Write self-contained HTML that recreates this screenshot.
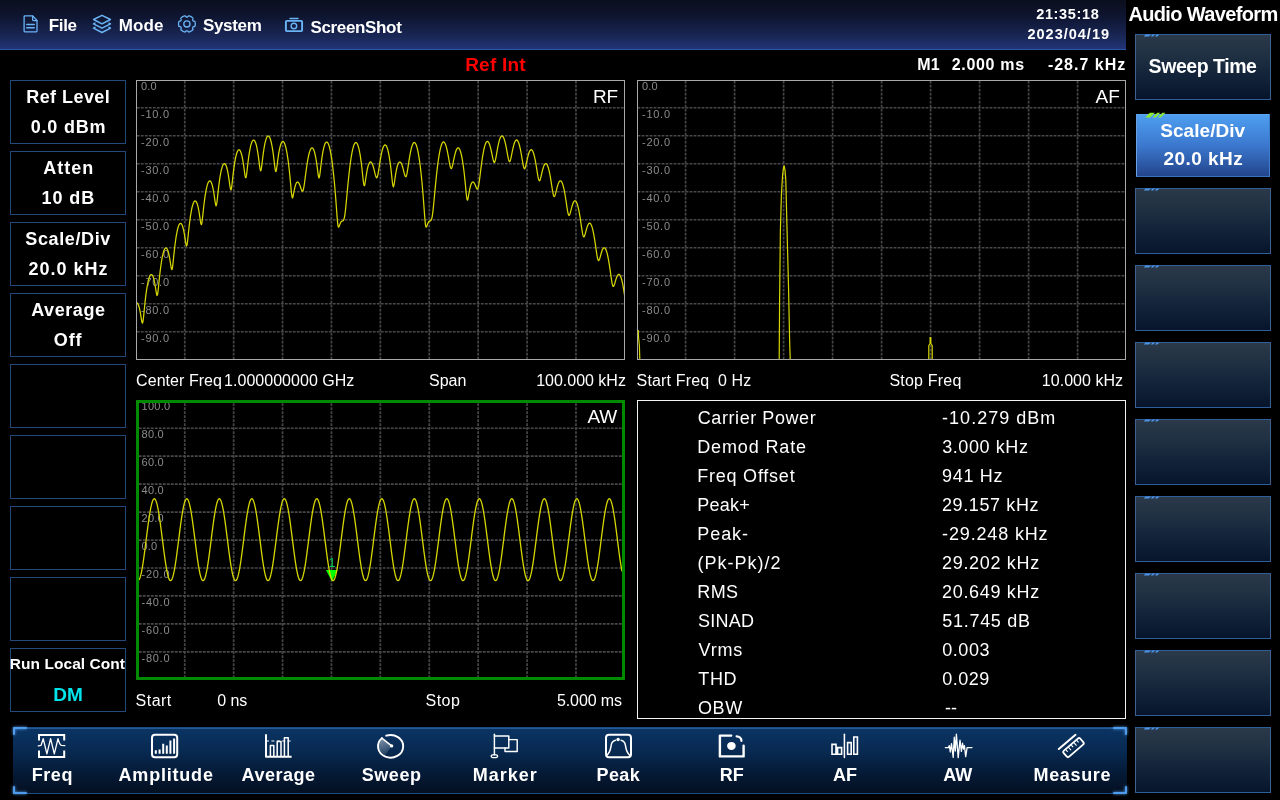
<!DOCTYPE html>
<html lang="en"><head><meta charset="utf-8"><title>Audio Waveform</title>
<style>
html,body{margin:0;padding:0;background:#000;}
body{width:1280px;height:800px;position:relative;overflow:hidden;font-family:"Liberation Sans",sans-serif;color:#fff;}
.t{position:absolute;line-height:1;white-space:pre;}
.abs{position:absolute;}
#topbar{left:0;top:0;width:1126px;height:50px;background:linear-gradient(180deg,#0b0e1c 0%,#0f1632 35%,#1a2858 75%,#24357a 100%);box-shadow:inset 0 -1px 0 #2b58a8;}
.sk{position:absolute;left:1135px;width:134px;height:64px;border:1px solid #2f5e9a;border-left-color:#3f618e;border-right-color:#3f618e;background:linear-gradient(180deg,#2b3949 0%,#203143 30%,#13243a 62%,#07152c 100%);}
.sk.on{left:1136px;width:132px;background:linear-gradient(180deg,#4e9ef0 0%,#3b78ce 50%,#23458c 100%);border-color:#5aa4f0 #3f7ccc #3a72c0 #6aa0e4;}
.lb{position:absolute;left:10px;width:114px;height:62px;border:1px solid #23487a;}
#bbar{left:13px;top:727px;width:1114px;height:67px;background:linear-gradient(180deg,#0b3565 0%,#082a52 35%,#051a36 70%,#040f20 100%);box-shadow:inset 0 1px 0 #1c4e88, inset 0 2px 0 #245a98, inset 0 -1px 0 #1c4c86;}
</style></head>
<body>
<div id="topbar" class="abs"></div>
<svg class="abs" style="left:0;top:0" width="420" height="50" viewBox="0 0 420 50" fill="none" stroke="#6ab4f5" stroke-width="1.5" stroke-linejoin="round" stroke-linecap="round">
<path d="M24.9 15.9h7.8l4.3 4.6v10.6a0.8 0.8 0 0 1-0.8 0.8h-11.3a0.8 0.8 0 0 1-0.8-0.8v-14.4a0.8 0.8 0 0 1 0.8-0.8z" stroke-width="1.3"/>
<path d="M32.6 16.2v3.2a1.3 1.3 0 0 0 1.3 1.3h3.0" stroke-width="1.3"/>
<path d="M26.8 24.5h7.4M26.8 27.8h7.4" stroke-width="1.5"/>
<path d="M102 15.3l8.4 4.2-8.4 4.3-8.4-4.3z"/>
<path d="M95 23.1L93.5 23.9L102 28.2L110.5 23.9L109 23.1"/>
<path d="M95 27.4L93.5 28.2L102 32.5L110.5 28.2L109 27.4"/>
<circle cx="186.9" cy="23.9" r="3.1" stroke-width="1.3"/>
<path d="M195.25 23.90 L195.25 24.05 L195.24 24.19 L195.24 24.34 L195.23 24.48 L195.22 24.63 L195.20 24.77 L195.19 24.92 L195.17 25.06 L195.15 25.21 L195.12 25.35 L195.10 25.49 L195.07 25.64 L195.04 25.78 L195.00 25.92 L194.97 26.06 L194.93 26.20 L194.84 26.33 L194.68 26.43 L194.47 26.51 L194.23 26.57 L193.97 26.61 L193.71 26.65 L193.48 26.69 L193.29 26.75 L193.16 26.82 L193.10 26.92 L193.05 27.03 L192.99 27.14 L192.93 27.25 L192.88 27.35 L192.81 27.45 L192.75 27.56 L192.69 27.66 L192.62 27.76 L192.56 27.86 L192.56 28.01 L192.61 28.20 L192.69 28.42 L192.78 28.66 L192.87 28.91 L192.94 29.15 L192.98 29.38 L192.97 29.56 L192.91 29.70 L192.80 29.80 L192.70 29.91 L192.59 30.01 L192.49 30.11 L192.38 30.20 L192.27 30.30 L192.15 30.39 L192.04 30.48 L191.93 30.57 L191.81 30.66 L191.69 30.74 L191.57 30.82 L191.45 30.90 L191.32 30.98 L191.20 31.06 L191.08 31.13 L190.95 31.20 L190.82 31.27 L190.69 31.34 L190.56 31.40 L190.43 31.47 L190.30 31.53 L190.16 31.59 L190.03 31.64 L189.89 31.70 L189.76 31.75 L189.62 31.80 L189.48 31.84 L189.34 31.89 L189.20 31.93 L189.06 31.97 L188.92 32.00 L188.77 31.99 L188.60 31.91 L188.43 31.76 L188.25 31.58 L188.08 31.37 L187.92 31.17 L187.77 31.00 L187.63 30.86 L187.50 30.79 L187.38 30.78 L187.26 30.79 L187.14 30.80 L187.02 30.80 L186.90 30.80 L186.78 30.80 L186.66 30.80 L186.54 30.79 L186.42 30.78 L186.30 30.79 L186.17 30.86 L186.03 31.00 L185.88 31.17 L185.72 31.37 L185.55 31.58 L185.37 31.76 L185.20 31.91 L185.03 31.99 L184.88 32.00 L184.74 31.97 L184.60 31.93 L184.46 31.89 L184.32 31.84 L184.18 31.80 L184.04 31.75 L183.91 31.70 L183.77 31.64 L183.64 31.59 L183.50 31.53 L183.37 31.47 L183.24 31.40 L183.11 31.34 L182.98 31.27 L182.85 31.20 L182.72 31.13 L182.60 31.06 L182.48 30.98 L182.35 30.90 L182.23 30.82 L182.11 30.74 L181.99 30.66 L181.87 30.57 L181.76 30.48 L181.65 30.39 L181.53 30.30 L181.42 30.20 L181.31 30.11 L181.21 30.01 L181.10 29.91 L181.00 29.80 L180.89 29.70 L180.83 29.56 L180.82 29.38 L180.86 29.15 L180.93 28.91 L181.02 28.66 L181.11 28.42 L181.19 28.20 L181.24 28.01 L181.24 27.86 L181.18 27.76 L181.11 27.66 L181.05 27.56 L180.99 27.45 L180.92 27.35 L180.87 27.25 L180.81 27.14 L180.75 27.03 L180.70 26.92 L180.64 26.82 L180.51 26.75 L180.32 26.69 L180.09 26.65 L179.83 26.61 L179.57 26.57 L179.33 26.51 L179.12 26.43 L178.96 26.33 L178.87 26.20 L178.83 26.06 L178.80 25.92 L178.76 25.78 L178.73 25.64 L178.70 25.49 L178.68 25.35 L178.65 25.21 L178.63 25.06 L178.61 24.92 L178.60 24.77 L178.58 24.63 L178.57 24.48 L178.56 24.34 L178.56 24.19 L178.55 24.05 L178.55 23.90 L178.55 23.75 L178.56 23.61 L178.56 23.46 L178.57 23.32 L178.58 23.17 L178.60 23.03 L178.61 22.88 L178.63 22.74 L178.65 22.59 L178.68 22.45 L178.70 22.31 L178.73 22.16 L178.76 22.02 L178.80 21.88 L178.83 21.74 L178.87 21.60 L178.96 21.47 L179.12 21.37 L179.33 21.29 L179.57 21.23 L179.83 21.19 L180.09 21.15 L180.32 21.11 L180.51 21.05 L180.64 20.98 L180.70 20.88 L180.75 20.77 L180.81 20.66 L180.87 20.55 L180.92 20.45 L180.99 20.35 L181.05 20.24 L181.11 20.14 L181.18 20.04 L181.24 19.94 L181.24 19.79 L181.19 19.60 L181.11 19.38 L181.02 19.14 L180.93 18.89 L180.86 18.65 L180.82 18.42 L180.83 18.24 L180.89 18.10 L181.00 18.00 L181.10 17.89 L181.21 17.79 L181.31 17.69 L181.42 17.60 L181.53 17.50 L181.65 17.41 L181.76 17.32 L181.87 17.23 L181.99 17.14 L182.11 17.06 L182.23 16.98 L182.35 16.90 L182.48 16.82 L182.60 16.74 L182.72 16.67 L182.85 16.60 L182.98 16.53 L183.11 16.46 L183.24 16.40 L183.37 16.33 L183.50 16.27 L183.64 16.21 L183.77 16.16 L183.91 16.10 L184.04 16.05 L184.18 16.00 L184.32 15.96 L184.46 15.91 L184.60 15.87 L184.74 15.83 L184.88 15.80 L185.03 15.81 L185.20 15.89 L185.37 16.04 L185.55 16.22 L185.72 16.43 L185.88 16.63 L186.03 16.80 L186.17 16.94 L186.30 17.01 L186.42 17.02 L186.54 17.01 L186.66 17.00 L186.78 17.00 L186.90 17.00 L187.02 17.00 L187.14 17.00 L187.26 17.01 L187.38 17.02 L187.50 17.01 L187.63 16.94 L187.77 16.80 L187.92 16.63 L188.08 16.43 L188.25 16.22 L188.43 16.04 L188.60 15.89 L188.77 15.81 L188.92 15.80 L189.06 15.83 L189.20 15.87 L189.34 15.91 L189.48 15.96 L189.62 16.00 L189.76 16.05 L189.89 16.10 L190.03 16.16 L190.16 16.21 L190.30 16.27 L190.43 16.33 L190.56 16.40 L190.69 16.46 L190.82 16.53 L190.95 16.60 L191.08 16.67 L191.20 16.74 L191.32 16.82 L191.45 16.90 L191.57 16.98 L191.69 17.06 L191.81 17.14 L191.93 17.23 L192.04 17.32 L192.15 17.41 L192.27 17.50 L192.38 17.60 L192.49 17.69 L192.59 17.79 L192.70 17.89 L192.80 18.00 L192.91 18.10 L192.97 18.24 L192.98 18.42 L192.94 18.65 L192.87 18.89 L192.78 19.14 L192.69 19.38 L192.61 19.60 L192.56 19.79 L192.56 19.94 L192.62 20.04 L192.69 20.14 L192.75 20.24 L192.81 20.35 L192.88 20.45 L192.93 20.55 L192.99 20.66 L193.05 20.77 L193.10 20.88 L193.16 20.98 L193.29 21.05 L193.48 21.11 L193.71 21.15 L193.97 21.19 L194.23 21.23 L194.47 21.29 L194.68 21.37 L194.84 21.47 L194.93 21.60 L194.97 21.74 L195.00 21.88 L195.04 22.02 L195.07 22.16 L195.10 22.31 L195.12 22.45 L195.15 22.59 L195.17 22.74 L195.19 22.88 L195.20 23.03 L195.22 23.17 L195.23 23.32 L195.24 23.46 L195.24 23.61 L195.25 23.75 L195.25 23.90z" stroke-width="1.3"/>
<rect x="285.9" y="20.9" width="16.2" height="10.2" rx="0.8" stroke-width="1.9"/>
<path d="M290 18.4h8" stroke-width="1.5"/>
<circle cx="293.9" cy="26" r="2.8" stroke-width="1.4"/>
</svg>
<div class="sk" style="top:34px"></div>
<svg class="abs" style="left:1140px;top:34px" width="24" height="4" viewBox="0 0 24 4"><path d="M3.6 2.6l2-2h5.4l-2 2zM10.6 2.6l2-2h2.6l-2 2zM14.8 2.6l2-2h2.6l-2 2z" fill="#4b94e6"/></svg>
<div class="sk on" style="top:114px;height:61px"></div>
<svg class="abs" style="left:1140px;top:107px" width="28" height="12" viewBox="0 0 28 12"><path d="M5.2 10.4l4.6-4.6h5l-4.6 4.6zM12.6 10.4l4.6-4.6h3l-4.6 4.6zM17.8 10.4l4.6-4.6h3l-4.6 4.6z" fill="#8eea30"/></svg>
<div class="sk" style="top:188px"></div>
<svg class="abs" style="left:1140px;top:188px" width="24" height="4" viewBox="0 0 24 4"><path d="M3.6 2.6l2-2h5.4l-2 2zM10.6 2.6l2-2h2.6l-2 2zM14.8 2.6l2-2h2.6l-2 2z" fill="#4b94e6"/></svg>
<div class="sk" style="top:265px"></div>
<svg class="abs" style="left:1140px;top:265px" width="24" height="4" viewBox="0 0 24 4"><path d="M3.6 2.6l2-2h5.4l-2 2zM10.6 2.6l2-2h2.6l-2 2zM14.8 2.6l2-2h2.6l-2 2z" fill="#4b94e6"/></svg>
<div class="sk" style="top:342px"></div>
<svg class="abs" style="left:1140px;top:342px" width="24" height="4" viewBox="0 0 24 4"><path d="M3.6 2.6l2-2h5.4l-2 2zM10.6 2.6l2-2h2.6l-2 2zM14.8 2.6l2-2h2.6l-2 2z" fill="#4b94e6"/></svg>
<div class="sk" style="top:419px"></div>
<svg class="abs" style="left:1140px;top:419px" width="24" height="4" viewBox="0 0 24 4"><path d="M3.6 2.6l2-2h5.4l-2 2zM10.6 2.6l2-2h2.6l-2 2zM14.8 2.6l2-2h2.6l-2 2z" fill="#4b94e6"/></svg>
<div class="sk" style="top:496px"></div>
<svg class="abs" style="left:1140px;top:496px" width="24" height="4" viewBox="0 0 24 4"><path d="M3.6 2.6l2-2h5.4l-2 2zM10.6 2.6l2-2h2.6l-2 2zM14.8 2.6l2-2h2.6l-2 2z" fill="#4b94e6"/></svg>
<div class="sk" style="top:573px"></div>
<svg class="abs" style="left:1140px;top:573px" width="24" height="4" viewBox="0 0 24 4"><path d="M3.6 2.6l2-2h5.4l-2 2zM10.6 2.6l2-2h2.6l-2 2zM14.8 2.6l2-2h2.6l-2 2z" fill="#4b94e6"/></svg>
<div class="sk" style="top:650px"></div>
<svg class="abs" style="left:1140px;top:650px" width="24" height="4" viewBox="0 0 24 4"><path d="M3.6 2.6l2-2h5.4l-2 2zM10.6 2.6l2-2h2.6l-2 2zM14.8 2.6l2-2h2.6l-2 2z" fill="#4b94e6"/></svg>
<div class="sk" style="top:727px"></div>
<svg class="abs" style="left:1140px;top:727px" width="24" height="4" viewBox="0 0 24 4"><path d="M3.6 2.6l2-2h5.4l-2 2zM10.6 2.6l2-2h2.6l-2 2zM14.8 2.6l2-2h2.6l-2 2z" fill="#4b94e6"/></svg>
<div class="lb" style="top:80px"></div>
<div class="lb" style="top:151px"></div>
<div class="lb" style="top:222px"></div>
<div class="lb" style="top:293px"></div>
<div class="lb" style="top:364px"></div>
<div class="lb" style="top:435px"></div>
<div class="lb" style="top:506px"></div>
<div class="lb" style="top:577px"></div>
<div class="lb" style="top:648px"></div>
<svg class="abs" style="left:0;top:0;will-change:transform" width="1280" height="800" viewBox="0 0 1280 800">
<path d="M184.75 80.75V359M233.65 80.75V359M282.55 80.75V359M331.45 80.75V359M380.35 80.75V359M429.25 80.75V359M478.15 80.75V359M527.05 80.75V359M575.95 80.75V359" stroke="#464646" stroke-width="1.7" stroke-dasharray="2.8 1.2" fill="none"/><path d="M136.85 107.75H624M136.85 135.75H624M136.85 163.75H624M136.85 191.75H624M136.85 219.75H624M136.85 247.75H624M136.85 275.75H624M136.85 303.75H624M136.85 331.75H624" stroke="#4a4a4a" stroke-width="1.7" stroke-dasharray="2.8 1.2" fill="none"/>
<rect x="136.5" y="80.5" width="488" height="279" fill="none" stroke="#a8a8a8" stroke-width="1"/>
<g font-family="Liberation Sans, sans-serif" font-size="11" fill="#8c8c8c"><text x="141" y="90.1" textLength="15.6" lengthAdjust="spacing">0.0</text><text x="141" y="118.1" textLength="28.0" lengthAdjust="spacing">-10.0</text><text x="141" y="146.1" textLength="28.0" lengthAdjust="spacing">-20.0</text><text x="141" y="174.1" textLength="28.0" lengthAdjust="spacing">-30.0</text><text x="141" y="202.1" textLength="28.0" lengthAdjust="spacing">-40.0</text><text x="141" y="230.1" textLength="28.0" lengthAdjust="spacing">-50.0</text><text x="141" y="258.1" textLength="28.0" lengthAdjust="spacing">-60.0</text><text x="141" y="286.1" textLength="28.0" lengthAdjust="spacing">-70.0</text><text x="141" y="314.1" textLength="28.0" lengthAdjust="spacing">-80.0</text><text x="141" y="342.1" textLength="28.0" lengthAdjust="spacing">-90.0</text></g>
<clipPath id="crf"><rect x="137" y="81" width="487" height="278"/></clipPath>
<path d="M136.5 302.8 L137.0 302.9 L137.5 303.3 L138.0 304.0 L138.5 305.2 L139.0 306.7 L139.5 308.6 L140.0 310.9 L140.5 313.6 L141.0 316.6 L141.5 319.8 L142.0 322.3 L142.5 323.1 L143.0 321.3 L143.5 317.4 L144.0 312.4 L144.5 307.4 L145.0 302.6 L145.5 298.1 L146.0 294.1 L146.5 290.6 L147.0 287.3 L147.5 284.5 L148.0 282.0 L148.5 279.9 L149.0 278.2 L149.5 276.7 L150.0 275.7 L150.5 274.9 L151.0 274.5 L151.5 274.5 L152.0 274.8 L152.5 275.5 L153.0 276.5 L153.5 277.9 L154.0 279.7 L154.5 282.0 L155.0 284.6 L155.5 287.6 L156.0 290.8 L156.5 293.7 L157.0 295.5 L157.5 294.8 L158.0 291.6 L158.5 287.0 L159.0 282.0 L159.5 277.1 L160.0 272.6 L160.5 268.5 L161.0 264.8 L161.5 261.5 L162.0 258.6 L162.5 256.0 L163.0 253.8 L163.5 252.0 L164.0 250.5 L164.5 249.3 L165.0 248.5 L165.5 248.1 L166.0 247.9 L166.5 248.2 L167.0 248.8 L167.5 249.7 L168.0 251.0 L168.5 252.7 L169.0 254.8 L169.5 257.3 L170.0 260.3 L170.5 263.5 L171.0 266.7 L171.5 269.1 L172.0 269.7 L172.5 267.5 L173.0 263.4 L173.5 258.5 L174.0 253.6 L174.5 249.0 L175.0 244.8 L175.5 241.0 L176.0 237.6 L176.5 234.6 L177.0 232.0 L177.5 229.7 L178.0 227.7 L178.5 226.2 L179.0 224.9 L179.5 224.1 L180.0 223.5 L180.5 223.3 L181.0 223.5 L181.5 224.0 L182.0 224.8 L182.5 226.1 L183.0 227.7 L183.5 229.7 L184.0 232.1 L184.5 234.9 L185.0 238.1 L185.5 241.4 L186.0 244.4 L186.5 246.0 L187.0 245.1 L187.5 241.8 L188.0 237.2 L188.5 232.3 L189.0 227.6 L189.5 223.3 L190.0 219.4 L190.5 215.9 L191.0 212.8 L191.5 210.1 L192.0 207.7 L192.5 205.7 L193.0 204.1 L193.5 202.7 L194.0 201.8 L194.5 201.2 L195.0 200.9 L195.5 201.0 L196.0 201.4 L196.5 202.2 L197.0 203.3 L197.5 204.8 L198.0 206.7 L198.5 209.0 L199.0 211.7 L199.5 214.8 L200.0 218.2 L200.5 221.6 L201.0 224.0 L201.5 224.5 L202.0 222.3 L202.5 218.2 L203.0 213.4 L203.5 208.7 L204.0 204.3 L204.5 200.3 L205.0 196.7 L205.5 193.5 L206.0 190.7 L206.5 188.2 L207.0 186.1 L207.5 184.4 L208.0 183.0 L208.5 182.0 L209.0 181.3 L209.5 180.9 L210.0 180.9 L210.5 181.2 L211.0 181.9 L211.5 183.0 L212.0 184.4 L212.5 186.2 L213.0 188.4 L213.5 191.0 L214.0 194.0 L214.5 197.4 L215.0 200.9 L215.5 204.0 L216.0 205.8 L216.5 205.0 L217.0 201.8 L217.5 197.3 L218.0 192.6 L218.5 188.1 L219.0 184.0 L219.5 180.3 L220.0 177.0 L220.5 174.1 L221.0 171.5 L221.5 169.4 L222.0 167.5 L222.5 166.1 L223.0 165.0 L223.5 164.2 L224.0 163.7 L224.5 163.7 L225.0 163.9 L225.5 164.5 L226.0 165.5 L226.5 166.8 L227.0 168.5 L227.5 170.6 L228.0 173.1 L228.5 176.0 L229.0 179.3 L229.5 182.9 L230.0 186.4 L230.5 189.2 L231.0 190.0 L231.5 188.2 L232.0 184.4 L232.5 179.8 L233.0 175.3 L233.5 171.1 L234.0 167.3 L234.5 163.8 L235.0 160.8 L235.5 158.2 L236.0 155.9 L236.5 154.0 L237.0 152.5 L237.5 151.3 L238.0 150.4 L238.5 149.9 L239.0 149.8 L239.5 149.9 L240.0 150.5 L240.5 151.4 L241.0 152.6 L241.5 154.2 L242.0 156.2 L242.5 158.5 L243.0 161.3 L243.5 164.5 L244.0 168.0 L244.5 171.8 L245.0 175.4 L245.5 177.7 L246.0 177.7 L246.5 175.2 L247.0 171.2 L247.5 166.7 L248.0 162.4 L248.5 158.5 L249.0 154.9 L249.5 151.8 L250.0 149.1 L250.5 146.7 L251.0 144.7 L251.5 143.1 L252.0 141.8 L252.5 140.9 L253.0 140.3 L253.5 140.0 L254.0 140.1 L254.5 140.6 L255.0 141.4 L255.5 142.5 L256.0 144.0 L256.5 145.9 L257.0 148.1 L257.5 150.8 L258.0 153.8 L258.5 157.3 L259.0 161.1 L259.5 165.1 L260.0 168.7 L260.5 170.8 L261.0 170.5 L261.5 167.7 L262.0 163.7 L262.5 159.5 L263.0 155.4 L263.5 151.8 L264.0 148.5 L264.5 145.7 L265.0 143.2 L265.5 141.1 L266.0 139.4 L266.5 138.0 L267.0 137.0 L267.5 136.3 L268.0 136.0 L268.5 136.0 L269.0 136.4 L269.5 137.1 L270.0 138.2 L270.5 139.6 L271.0 141.3 L271.5 143.5 L272.0 146.0 L272.5 148.8 L273.0 152.1 L273.5 155.9 L274.0 159.9 L274.5 164.2 L275.0 168.3 L275.5 171.1 L276.0 171.6 L276.5 169.6 L277.0 166.0 L277.5 162.1 L278.0 158.3 L278.5 154.9 L279.0 151.9 L279.5 149.3 L280.0 147.1 L280.5 145.3 L281.0 143.8 L281.5 142.7 L282.0 141.9 L282.5 141.5 L283.0 141.4 L283.5 141.7 L284.0 142.3 L284.5 143.3 L285.0 144.6 L285.5 146.2 L286.0 148.2 L286.5 150.6 L287.0 153.2 L287.5 156.3 L288.0 159.7 L288.5 163.5 L289.0 167.7 L289.5 172.2 L290.0 177.2 L290.5 182.6 L291.0 188.1 L291.5 193.2 L292.0 196.8 L292.5 198.0 L293.0 196.7 L293.5 194.2 L294.0 191.5 L294.5 189.0 L295.0 186.8 L295.5 185.1 L296.0 183.8 L296.5 182.8 L297.0 182.3 L297.5 182.0 L298.0 182.2 L298.5 182.6 L299.0 183.3 L299.5 184.4 L300.0 185.6 L300.5 187.0 L301.0 188.5 L301.5 189.9 L302.0 191.0 L302.5 191.3 L303.0 190.7 L303.5 189.0 L304.0 186.3 L304.5 183.0 L305.0 179.2 L305.5 175.4 L306.0 171.6 L306.5 168.0 L307.0 164.6 L307.5 161.5 L308.0 158.7 L308.5 156.2 L309.0 154.0 L309.5 152.2 L310.0 150.6 L310.5 149.4 L311.0 148.6 L311.5 148.0 L312.0 147.8 L312.5 148.0 L313.0 148.5 L313.5 149.3 L314.0 150.5 L314.5 152.1 L315.0 154.0 L315.5 156.3 L316.0 159.0 L316.5 162.1 L317.0 165.6 L317.5 169.5 L318.0 173.4 L318.5 176.6 L319.0 178.0 L319.5 176.7 L320.0 173.4 L320.5 169.2 L321.0 164.9 L321.5 160.9 L322.0 157.3 L322.5 154.1 L323.0 151.3 L323.5 148.9 L324.0 146.9 L324.5 145.2 L325.0 143.9 L325.5 142.9 L326.0 142.3 L326.5 142.0 L327.0 142.0 L327.5 142.4 L328.0 143.2 L328.5 144.2 L329.0 145.6 L329.5 147.4 L330.0 149.5 L330.5 151.9 L331.0 154.7 L331.5 157.8 L332.0 161.2 L332.5 165.0 L333.0 169.2 L333.5 173.7 L334.0 178.6 L334.5 183.8 L335.0 189.5 L335.5 195.6 L336.0 202.1 L336.5 208.8 L337.0 215.6 L337.5 221.7 L338.0 225.8 L338.5 227.2 L339.0 226.7 L339.5 225.3 L340.0 223.9 L340.5 222.7 L341.0 221.9 L341.5 221.4 L342.0 221.1 L342.5 221.0 L343.0 220.8 L343.5 220.3 L344.0 219.1 L344.5 217.1 L345.0 213.9 L345.5 209.8 L346.0 204.9 L346.5 199.6 L347.0 194.3 L347.5 188.9 L348.0 183.8 L348.5 178.8 L349.0 174.2 L349.5 169.8 L350.0 165.7 L350.5 161.9 L351.0 158.5 L351.5 155.4 L352.0 152.6 L352.5 150.2 L353.0 148.1 L353.5 146.3 L354.0 144.9 L354.5 143.8 L355.0 143.0 L355.5 142.6 L356.0 142.5 L356.5 142.8 L357.0 143.4 L357.5 144.3 L358.0 145.6 L358.5 147.2 L359.0 149.2 L359.5 151.5 L360.0 154.2 L360.5 157.3 L361.0 160.8 L361.5 164.7 L362.0 169.0 L362.5 173.6 L363.0 178.4 L363.5 182.7 L364.0 185.5 L364.5 185.8 L365.0 183.7 L365.5 180.4 L366.0 177.0 L366.5 173.8 L367.0 170.9 L367.5 168.5 L368.0 166.5 L368.5 164.9 L369.0 163.6 L369.5 162.7 L370.0 162.2 L370.5 161.9 L371.0 162.1 L371.5 162.5 L372.0 163.3 L372.5 164.4 L373.0 165.8 L373.5 167.5 L374.0 169.3 L374.5 171.4 L375.0 173.5 L375.5 175.4 L376.0 176.9 L376.5 177.8 L377.0 177.6 L377.5 176.3 L378.0 174.1 L378.5 171.2 L379.0 168.0 L379.5 164.8 L380.0 161.6 L380.5 158.6 L381.0 155.9 L381.5 153.4 L382.0 151.2 L382.5 149.3 L383.0 147.8 L383.5 146.6 L384.0 145.7 L384.5 145.1 L385.0 144.9 L385.5 145.0 L386.0 145.4 L386.5 146.2 L387.0 147.4 L387.5 148.8 L388.0 150.7 L388.5 152.8 L389.0 155.4 L389.5 158.3 L390.0 161.6 L390.5 165.4 L391.0 169.5 L391.5 174.0 L392.0 178.7 L392.5 183.1 L393.0 186.2 L393.5 186.9 L394.0 185.1 L394.5 182.0 L395.0 178.4 L395.5 175.1 L396.0 172.1 L396.5 169.5 L397.0 167.3 L397.5 165.5 L398.0 164.1 L398.5 163.0 L399.0 162.3 L399.5 162.0 L400.0 162.0 L400.5 162.3 L401.0 162.9 L401.5 163.9 L402.0 165.1 L402.5 166.7 L403.0 168.4 L403.5 170.3 L404.0 172.3 L404.5 174.3 L405.0 175.8 L405.5 176.7 L406.0 176.7 L406.5 175.5 L407.0 173.4 L407.5 170.5 L408.0 167.3 L408.5 164.0 L409.0 160.7 L409.5 157.6 L410.0 154.7 L410.5 152.1 L411.0 149.8 L411.5 147.8 L412.0 146.1 L412.5 144.7 L413.0 143.7 L413.5 142.9 L414.0 142.6 L414.5 142.5 L415.0 142.8 L415.5 143.5 L416.0 144.4 L416.5 145.7 L417.0 147.4 L417.5 149.3 L418.0 151.7 L418.5 154.3 L419.0 157.3 L419.5 160.7 L420.0 164.3 L420.5 168.4 L421.0 172.8 L421.5 177.5 L422.0 182.7 L422.5 188.2 L423.0 194.2 L423.5 200.5 L424.0 207.2 L424.5 214.0 L425.0 220.4 L425.5 225.1 L426.0 227.2 L426.5 227.0 L427.0 225.8 L427.5 224.3 L428.0 223.0 L428.5 222.1 L429.0 221.5 L429.5 221.1 L430.0 220.9 L430.5 220.8 L431.0 220.3 L431.5 219.4 L432.0 217.6 L432.5 214.7 L433.0 210.8 L433.5 206.0 L434.0 200.8 L434.5 195.5 L435.0 190.1 L435.5 184.9 L436.0 179.8 L436.5 175.1 L437.0 170.6 L437.5 166.4 L438.0 162.5 L438.5 159.0 L439.0 155.8 L439.5 152.9 L440.0 150.4 L440.5 148.2 L441.0 146.3 L441.5 144.7 L442.0 143.5 L442.5 142.7 L443.0 142.1 L443.5 141.9 L444.0 142.1 L444.5 142.5 L445.0 143.3 L445.5 144.4 L446.0 145.9 L446.5 147.6 L447.0 149.7 L447.5 152.0 L448.0 154.6 L448.5 157.4 L449.0 160.2 L449.5 163.0 L450.0 165.6 L450.5 167.5 L451.0 168.6 L451.5 168.6 L452.0 167.5 L452.5 165.6 L453.0 163.4 L453.5 160.9 L454.0 158.5 L454.5 156.2 L455.0 154.1 L455.5 152.3 L456.0 150.8 L456.5 149.5 L457.0 148.6 L457.5 148.1 L458.0 147.8 L458.5 147.9 L459.0 148.3 L459.5 149.1 L460.0 150.1 L460.5 151.6 L461.0 153.4 L461.5 155.5 L462.0 157.9 L462.5 160.8 L463.0 164.0 L463.5 167.5 L464.0 171.5 L464.5 175.9 L465.0 180.6 L465.5 185.8 L466.0 191.1 L466.5 195.9 L467.0 199.3 L467.5 200.2 L468.0 198.7 L468.5 196.0 L469.0 193.0 L469.5 190.3 L470.0 188.0 L470.5 186.0 L471.0 184.5 L471.5 183.3 L472.0 182.5 L472.5 182.1 L473.0 182.0 L473.5 182.2 L474.0 182.7 L474.5 183.5 L475.0 184.6 L475.5 185.8 L476.0 187.1 L476.5 188.2 L477.0 189.0 L477.5 189.2 L478.0 188.3 L478.5 186.4 L479.0 183.5 L479.5 179.9 L480.0 175.9 L480.5 171.9 L481.0 167.9 L481.5 164.1 L482.0 160.5 L482.5 157.1 L483.0 154.1 L483.5 151.4 L484.0 149.0 L484.5 146.9 L485.0 145.1 L485.5 143.7 L486.0 142.6 L486.5 141.9 L487.0 141.5 L487.5 141.4 L488.0 141.6 L488.5 142.2 L489.0 143.1 L489.5 144.3 L490.0 145.8 L490.5 147.6 L491.0 149.7 L491.5 152.0 L492.0 154.4 L492.5 156.9 L493.0 159.2 L493.5 161.1 L494.0 162.3 L494.5 162.4 L495.0 161.4 L495.5 159.6 L496.0 157.1 L496.5 154.3 L497.0 151.4 L497.5 148.7 L498.0 146.1 L498.5 143.8 L499.0 141.7 L499.5 139.9 L500.0 138.5 L500.5 137.3 L501.0 136.5 L501.5 136.1 L502.0 135.9 L502.5 136.1 L503.0 136.6 L503.5 137.4 L504.0 138.6 L504.5 140.1 L505.0 141.8 L505.5 143.9 L506.0 146.3 L506.5 148.8 L507.0 151.6 L507.5 154.4 L508.0 157.1 L508.5 159.4 L509.0 161.1 L509.5 161.7 L510.0 161.3 L510.5 159.9 L511.0 157.8 L511.5 155.4 L512.0 152.9 L512.5 150.4 L513.0 148.1 L513.5 146.1 L514.0 144.3 L514.5 142.8 L515.0 141.6 L515.5 140.7 L516.0 140.2 L516.5 139.9 L517.0 140.1 L517.5 140.5 L518.0 141.3 L518.5 142.4 L519.0 143.8 L519.5 145.5 L520.0 147.6 L520.5 149.9 L521.0 152.5 L521.5 155.3 L522.0 158.3 L522.5 161.2 L523.0 164.1 L523.5 166.5 L524.0 168.2 L524.5 168.8 L525.0 168.4 L525.5 167.0 L526.0 165.0 L526.5 162.7 L527.0 160.4 L527.5 158.2 L528.0 156.1 L528.5 154.3 L529.0 152.8 L529.5 151.5 L530.0 150.6 L530.5 150.0 L531.0 149.7 L531.5 149.7 L532.0 150.1 L532.5 150.8 L533.0 151.8 L533.5 153.2 L534.0 154.9 L534.5 156.8 L535.0 159.1 L535.5 161.7 L536.0 164.5 L536.5 167.6 L537.0 170.7 L537.5 173.8 L538.0 176.7 L538.5 179.0 L539.0 180.4 L539.5 180.8 L540.0 180.2 L540.5 178.7 L541.0 176.7 L541.5 174.5 L542.0 172.4 L542.5 170.3 L543.0 168.5 L543.5 166.9 L544.0 165.6 L544.5 164.6 L545.0 164.0 L545.5 163.6 L546.0 163.6 L546.5 163.9 L547.0 164.5 L547.5 165.5 L548.0 166.8 L548.5 168.4 L549.0 170.3 L549.5 172.5 L550.0 175.1 L550.5 177.9 L551.0 180.9 L551.5 184.1 L552.0 187.3 L552.5 190.5 L553.0 193.3 L553.5 195.4 L554.0 196.5 L554.5 196.5 L555.0 195.5 L555.5 193.9 L556.0 191.9 L556.5 189.9 L557.0 187.8 L557.5 186.0 L558.0 184.4 L558.5 183.1 L559.0 182.0 L559.5 181.3 L560.0 180.9 L560.5 180.8 L561.0 181.0 L561.5 181.5 L562.0 182.4 L562.5 183.7 L563.0 185.2 L563.5 187.1 L564.0 189.2 L564.5 191.7 L565.0 194.5 L565.5 197.5 L566.0 200.7 L566.5 204.1 L567.0 207.4 L567.5 210.5 L568.0 213.1 L568.5 214.8 L569.0 215.5 L569.5 215.1 L570.0 213.8 L570.5 212.1 L571.0 210.1 L571.5 208.2 L572.0 206.3 L572.5 204.7 L573.0 203.3 L573.5 202.2 L574.0 201.4 L574.5 200.9 L575.0 200.8 L575.5 200.9 L576.0 201.4 L576.5 202.2 L577.0 203.4 L577.5 204.8 L578.0 206.6 L578.5 208.8 L579.0 211.2 L579.5 213.9 L580.0 216.9 L580.5 220.1 L581.0 223.5 L581.5 226.9 L582.0 230.2 L582.5 233.2 L583.0 235.4 L583.5 236.7 L584.0 236.9 L584.5 236.1 L585.0 234.6 L585.5 232.8 L586.0 230.9 L586.5 229.1 L587.0 227.4 L587.5 226.0 L588.0 224.8 L588.5 224.0 L589.0 223.4 L589.5 223.2 L590.0 223.3 L590.5 223.7 L591.0 224.5 L591.5 225.5 L592.0 226.9 L592.5 228.7 L593.0 230.7 L593.5 233.1 L594.0 235.8 L594.5 238.7 L595.0 241.9 L595.5 245.3 L596.0 248.8 L596.5 252.3 L597.0 255.5 L597.5 258.1 L598.0 259.9 L598.5 260.7 L599.0 260.3 L599.5 259.2 L600.0 257.6 L600.5 255.8 L601.0 254.0 L601.5 252.3 L602.0 250.8 L602.5 249.6 L603.0 248.7 L603.5 248.1 L604.0 247.8 L604.5 247.8 L605.0 248.2 L605.5 248.9 L606.0 249.9 L606.5 251.2 L607.0 252.9 L607.5 254.9 L608.0 257.2 L608.5 259.8 L609.0 262.7 L609.5 265.8 L610.0 269.2 L610.5 272.7 L611.0 276.3 L611.5 279.7 L612.0 282.7 L612.5 285.0 L613.0 286.3 L613.5 286.4 L614.0 285.6 L614.5 284.3 L615.0 282.6 L615.5 280.8 L616.0 279.1 L616.5 277.7 L617.0 276.4 L617.5 275.4 L618.0 274.8 L618.5 274.4 L619.0 274.3 L619.5 274.6 L620.0 275.2 L620.5 276.2 L621.0 277.4 L621.5 279.0 L622.0 280.9 L622.5 283.2 L623.0 285.7 L623.5 288.6 L624.0 291.7 L624.5 295.1" fill="none" stroke="#d6d600" stroke-width="1.25" stroke-linejoin="round" clip-path="url(#crf)"/>
<path d="M685.60 80.75V359M734.60 80.75V359M783.60 80.75V359M832.60 80.75V359M881.60 80.75V359M930.60 80.75V359M979.60 80.75V359M1028.60 80.75V359M1077.60 80.75V359" stroke="#464646" stroke-width="1.7" stroke-dasharray="2.8 1.2" fill="none"/><path d="M637.6 107.75H1125M637.6 135.75H1125M637.6 163.75H1125M637.6 191.75H1125M637.6 219.75H1125M637.6 247.75H1125M637.6 275.75H1125M637.6 303.75H1125M637.6 331.75H1125" stroke="#4a4a4a" stroke-width="1.7" stroke-dasharray="2.8 1.2" fill="none"/>
<rect x="637.5" y="80.5" width="488" height="279" fill="none" stroke="#a8a8a8" stroke-width="1"/>
<g font-family="Liberation Sans, sans-serif" font-size="11" fill="#8c8c8c"><text x="642" y="90.1" textLength="15.6" lengthAdjust="spacing">0.0</text><text x="642" y="118.1" textLength="28.0" lengthAdjust="spacing">-10.0</text><text x="642" y="146.1" textLength="28.0" lengthAdjust="spacing">-20.0</text><text x="642" y="174.1" textLength="28.0" lengthAdjust="spacing">-30.0</text><text x="642" y="202.1" textLength="28.0" lengthAdjust="spacing">-40.0</text><text x="642" y="230.1" textLength="28.0" lengthAdjust="spacing">-50.0</text><text x="642" y="258.1" textLength="28.0" lengthAdjust="spacing">-60.0</text><text x="642" y="286.1" textLength="28.0" lengthAdjust="spacing">-70.0</text><text x="642" y="314.1" textLength="28.0" lengthAdjust="spacing">-80.0</text><text x="642" y="342.1" textLength="28.0" lengthAdjust="spacing">-90.0</text></g>
<clipPath id="caf"><rect x="638" y="81" width="487" height="278"/></clipPath>
<path d="M638.2 330 L638.6 338 L639.4 346 L639.8 359 M779.2 359 L779.6 300 L780.4 230 L781.4 195 L782.6 175 L783.6 167 L784.2 166 L785 170 L785.8 180 L787 228 L788.6 290 L789.6 340 L790.2 359 M928.8 359 L928.8 345.5 L930.1 343.5 L930.1 337.5 L930.8 337.5 L930.8 343.5 L932.2 345.5 L932.2 359" fill="none" stroke="#d6d600" stroke-width="1.2" stroke-linejoin="round"/>
<path d="M184.75 403.3V677M233.65 403.3V677M282.55 403.3V677M331.45 403.3V677M380.35 403.3V677M429.25 403.3V677M478.15 403.3V677M527.05 403.3V677M575.95 403.3V677" stroke="#464646" stroke-width="1.7" stroke-dasharray="2.8 1.2" fill="none"/><path d="M138.85 428.25H622M138.85 456.20H622M138.85 484.15H622M138.85 512.10H622M138.85 540.05H622M138.85 568.00H622M138.85 595.95H622M138.85 623.90H622M138.85 651.85H622" stroke="#4a4a4a" stroke-width="1.7" stroke-dasharray="2.8 1.2" fill="none"/>
<rect x="137.5" y="401.5" width="486" height="277" fill="none" stroke="#008a00" stroke-width="3"/>
<clipPath id="caw"><rect x="139" y="403" width="483" height="274"/></clipPath>
<g clip-path="url(#caw)"><g font-family="Liberation Sans, sans-serif" font-size="11" fill="#8c8c8c"><text x="141.5" y="410.4" textLength="28.6" lengthAdjust="spacing">100.0</text><text x="141.5" y="438.3" textLength="22.2" lengthAdjust="spacing">80.0</text><text x="141.5" y="466.3" textLength="22.2" lengthAdjust="spacing">60.0</text><text x="141.5" y="494.2" textLength="22.2" lengthAdjust="spacing">40.0</text><text x="141.5" y="522.2" textLength="22.2" lengthAdjust="spacing">20.0</text><text x="141.5" y="550.2" textLength="15.6" lengthAdjust="spacing">0.0</text><text x="141.5" y="578.1" textLength="28.0" lengthAdjust="spacing">-20.0</text><text x="141.5" y="606.1" textLength="28.0" lengthAdjust="spacing">-40.0</text><text x="141.5" y="634.0" textLength="28.0" lengthAdjust="spacing">-60.0</text><text x="141.5" y="662.0" textLength="28.0" lengthAdjust="spacing">-80.0</text></g>
<path d="M326 570H337.6L331.9 581.6z" fill="#00ff00"/>
<path d="M139.0 580.0 L139.5 579.1 L140.0 577.8 L140.5 576.2 L141.0 574.2 L141.5 571.9 L142.0 569.3 L142.5 566.4 L143.0 563.3 L143.5 560.0 L144.0 556.4 L144.5 552.7 L145.0 548.9 L145.5 545.0 L146.0 541.1 L146.5 537.1 L147.0 533.2 L147.5 529.3 L148.0 525.5 L148.5 521.9 L149.0 518.4 L149.5 515.1 L150.0 512.1 L150.5 509.3 L151.0 506.8 L151.5 504.6 L152.0 502.7 L152.5 501.2 L153.0 500.0 L153.5 499.2 L154.0 498.8 L154.5 498.7 L155.0 499.1 L155.5 499.8 L156.0 500.9 L156.5 502.4 L157.0 504.2 L157.5 506.3 L158.0 508.7 L158.5 511.5 L159.0 514.5 L159.5 517.7 L160.0 521.2 L160.5 524.8 L161.0 528.5 L161.5 532.4 L162.0 536.3 L162.5 540.3 L163.0 544.2 L163.5 548.2 L164.0 552.0 L164.5 555.7 L165.0 559.3 L165.5 562.7 L166.0 565.8 L166.5 568.8 L167.0 571.4 L167.5 573.8 L168.0 575.8 L168.5 577.5 L169.0 578.9 L169.5 579.9 L170.0 580.5 L170.5 580.7 L171.0 580.5 L171.5 580.0 L172.0 579.1 L172.5 577.8 L173.0 576.2 L173.5 574.2 L174.0 571.9 L174.5 569.3 L175.0 566.4 L175.5 563.3 L176.0 560.0 L176.5 556.4 L177.0 552.7 L177.5 548.9 L178.0 545.0 L178.5 541.1 L179.0 537.1 L179.5 533.2 L180.0 529.3 L180.5 525.5 L181.0 521.9 L181.5 518.4 L182.0 515.1 L182.5 512.1 L183.0 509.3 L183.5 506.8 L184.0 504.6 L184.5 502.7 L185.0 501.2 L185.5 500.0 L186.0 499.2 L186.5 498.8 L187.0 498.7 L187.5 499.1 L188.0 499.8 L188.5 500.9 L189.0 502.4 L189.5 504.2 L190.0 506.3 L190.5 508.7 L191.0 511.5 L191.5 514.5 L192.0 517.7 L192.5 521.2 L193.0 524.8 L193.5 528.5 L194.0 532.4 L194.5 536.3 L195.0 540.3 L195.5 544.2 L196.0 548.2 L196.5 552.0 L197.0 555.7 L197.5 559.3 L198.0 562.7 L198.5 565.8 L199.0 568.8 L199.5 571.4 L200.0 573.8 L200.5 575.8 L201.0 577.5 L201.5 578.9 L202.0 579.9 L202.5 580.5 L203.0 580.7 L203.5 580.5 L204.0 580.0 L204.5 579.1 L205.0 577.8 L205.5 576.2 L206.0 574.2 L206.5 571.9 L207.0 569.3 L207.5 566.4 L208.0 563.3 L208.5 560.0 L209.0 556.4 L209.5 552.7 L210.0 548.9 L210.5 545.0 L211.0 541.1 L211.5 537.1 L212.0 533.2 L212.5 529.3 L213.0 525.5 L213.5 521.9 L214.0 518.4 L214.5 515.1 L215.0 512.1 L215.5 509.3 L216.0 506.8 L216.5 504.6 L217.0 502.7 L217.5 501.2 L218.0 500.0 L218.5 499.2 L219.0 498.8 L219.5 498.7 L220.0 499.1 L220.5 499.8 L221.0 500.9 L221.5 502.4 L222.0 504.2 L222.5 506.3 L223.0 508.7 L223.5 511.5 L224.0 514.5 L224.5 517.7 L225.0 521.2 L225.5 524.8 L226.0 528.5 L226.5 532.4 L227.0 536.3 L227.5 540.3 L228.0 544.2 L228.5 548.2 L229.0 552.0 L229.5 555.7 L230.0 559.3 L230.5 562.7 L231.0 565.8 L231.5 568.8 L232.0 571.4 L232.5 573.8 L233.0 575.8 L233.5 577.5 L234.0 578.9 L234.5 579.9 L235.0 580.5 L235.5 580.7 L236.0 580.5 L236.5 580.0 L237.0 579.1 L237.5 577.8 L238.0 576.2 L238.5 574.2 L239.0 571.9 L239.5 569.3 L240.0 566.4 L240.5 563.3 L241.0 560.0 L241.5 556.4 L242.0 552.7 L242.5 548.9 L243.0 545.0 L243.5 541.1 L244.0 537.1 L244.5 533.2 L245.0 529.3 L245.5 525.5 L246.0 521.9 L246.5 518.4 L247.0 515.1 L247.5 512.1 L248.0 509.3 L248.5 506.8 L249.0 504.6 L249.5 502.7 L250.0 501.2 L250.5 500.0 L251.0 499.2 L251.5 498.8 L252.0 498.7 L252.5 499.1 L253.0 499.8 L253.5 500.9 L254.0 502.4 L254.5 504.2 L255.0 506.3 L255.5 508.7 L256.0 511.5 L256.5 514.5 L257.0 517.7 L257.5 521.2 L258.0 524.8 L258.5 528.5 L259.0 532.4 L259.5 536.3 L260.0 540.3 L260.5 544.2 L261.0 548.2 L261.5 552.0 L262.0 555.7 L262.5 559.3 L263.0 562.7 L263.5 565.8 L264.0 568.8 L264.5 571.4 L265.0 573.8 L265.5 575.8 L266.0 577.5 L266.5 578.9 L267.0 579.9 L267.5 580.5 L268.0 580.7 L268.5 580.5 L269.0 580.0 L269.5 579.1 L270.0 577.8 L270.5 576.2 L271.0 574.2 L271.5 571.9 L272.0 569.3 L272.5 566.4 L273.0 563.3 L273.5 560.0 L274.0 556.4 L274.5 552.7 L275.0 548.9 L275.5 545.0 L276.0 541.1 L276.5 537.1 L277.0 533.2 L277.5 529.3 L278.0 525.5 L278.5 521.9 L279.0 518.4 L279.5 515.1 L280.0 512.1 L280.5 509.3 L281.0 506.8 L281.5 504.6 L282.0 502.7 L282.5 501.2 L283.0 500.0 L283.5 499.2 L284.0 498.8 L284.5 498.7 L285.0 499.1 L285.5 499.8 L286.0 500.9 L286.5 502.4 L287.0 504.2 L287.5 506.3 L288.0 508.7 L288.5 511.5 L289.0 514.5 L289.5 517.7 L290.0 521.2 L290.5 524.8 L291.0 528.5 L291.5 532.4 L292.0 536.3 L292.5 540.3 L293.0 544.2 L293.5 548.2 L294.0 552.0 L294.5 555.7 L295.0 559.3 L295.5 562.7 L296.0 565.8 L296.5 568.8 L297.0 571.4 L297.5 573.8 L298.0 575.8 L298.5 577.5 L299.0 578.9 L299.5 579.9 L300.0 580.5 L300.5 580.7 L301.0 580.5 L301.5 580.0 L302.0 579.1 L302.5 577.8 L303.0 576.2 L303.5 574.2 L304.0 571.9 L304.5 569.3 L305.0 566.4 L305.5 563.3 L306.0 560.0 L306.5 556.4 L307.0 552.7 L307.5 548.9 L308.0 545.0 L308.5 541.1 L309.0 537.1 L309.5 533.2 L310.0 529.3 L310.5 525.5 L311.0 521.9 L311.5 518.4 L312.0 515.1 L312.5 512.1 L313.0 509.3 L313.5 506.8 L314.0 504.6 L314.5 502.7 L315.0 501.2 L315.5 500.0 L316.0 499.2 L316.5 498.8 L317.0 498.7 L317.5 499.1 L318.0 499.8 L318.5 500.9 L319.0 502.4 L319.5 504.2 L320.0 506.3 L320.5 508.7 L321.0 511.5 L321.5 514.5 L322.0 517.7 L322.5 521.2 L323.0 524.8 L323.5 528.5 L324.0 532.4 L324.5 536.3 L325.0 540.3 L325.5 544.2 L326.0 548.2 L326.5 552.0 L327.0 555.7 L327.5 559.3 L328.0 562.7 L328.5 565.8 L329.0 568.8 L329.5 571.4 L330.0 573.8 L330.5 575.8 L331.0 577.5 L331.5 578.9 L332.0 579.9 L332.5 580.5 L333.0 580.7 L333.5 580.5 L334.0 580.0 L334.5 579.1 L335.0 577.8 L335.5 576.2 L336.0 574.2 L336.5 571.9 L337.0 569.3 L337.5 566.4 L338.0 563.3 L338.5 560.0 L339.0 556.4 L339.5 552.7 L340.0 548.9 L340.5 545.0 L341.0 541.1 L341.5 537.1 L342.0 533.2 L342.5 529.3 L343.0 525.5 L343.5 521.9 L344.0 518.4 L344.5 515.1 L345.0 512.1 L345.5 509.3 L346.0 506.8 L346.5 504.6 L347.0 502.7 L347.5 501.2 L348.0 500.0 L348.5 499.2 L349.0 498.8 L349.5 498.7 L350.0 499.1 L350.5 499.8 L351.0 500.9 L351.5 502.4 L352.0 504.2 L352.5 506.3 L353.0 508.7 L353.5 511.5 L354.0 514.5 L354.5 517.7 L355.0 521.2 L355.5 524.8 L356.0 528.5 L356.5 532.4 L357.0 536.3 L357.5 540.3 L358.0 544.2 L358.5 548.2 L359.0 552.0 L359.5 555.7 L360.0 559.3 L360.5 562.7 L361.0 565.8 L361.5 568.8 L362.0 571.4 L362.5 573.8 L363.0 575.8 L363.5 577.5 L364.0 578.9 L364.5 579.9 L365.0 580.5 L365.5 580.7 L366.0 580.5 L366.5 580.0 L367.0 579.1 L367.5 577.8 L368.0 576.2 L368.5 574.2 L369.0 571.9 L369.5 569.3 L370.0 566.4 L370.5 563.3 L371.0 560.0 L371.5 556.4 L372.0 552.7 L372.5 548.9 L373.0 545.0 L373.5 541.1 L374.0 537.1 L374.5 533.2 L375.0 529.3 L375.5 525.5 L376.0 521.9 L376.5 518.4 L377.0 515.1 L377.5 512.1 L378.0 509.3 L378.5 506.8 L379.0 504.6 L379.5 502.7 L380.0 501.2 L380.5 500.0 L381.0 499.2 L381.5 498.8 L382.0 498.7 L382.5 499.1 L383.0 499.8 L383.5 500.9 L384.0 502.4 L384.5 504.2 L385.0 506.3 L385.5 508.7 L386.0 511.5 L386.5 514.5 L387.0 517.7 L387.5 521.2 L388.0 524.8 L388.5 528.5 L389.0 532.4 L389.5 536.3 L390.0 540.3 L390.5 544.2 L391.0 548.2 L391.5 552.0 L392.0 555.7 L392.5 559.3 L393.0 562.7 L393.5 565.8 L394.0 568.8 L394.5 571.4 L395.0 573.8 L395.5 575.8 L396.0 577.5 L396.5 578.9 L397.0 579.9 L397.5 580.5 L398.0 580.7 L398.5 580.5 L399.0 580.0 L399.5 579.1 L400.0 577.8 L400.5 576.2 L401.0 574.2 L401.5 571.9 L402.0 569.3 L402.5 566.4 L403.0 563.3 L403.5 560.0 L404.0 556.4 L404.5 552.7 L405.0 548.9 L405.5 545.0 L406.0 541.1 L406.5 537.1 L407.0 533.2 L407.5 529.3 L408.0 525.5 L408.5 521.9 L409.0 518.4 L409.5 515.1 L410.0 512.1 L410.5 509.3 L411.0 506.8 L411.5 504.6 L412.0 502.7 L412.5 501.2 L413.0 500.0 L413.5 499.2 L414.0 498.8 L414.5 498.7 L415.0 499.1 L415.5 499.8 L416.0 500.9 L416.5 502.4 L417.0 504.2 L417.5 506.3 L418.0 508.7 L418.5 511.5 L419.0 514.5 L419.5 517.7 L420.0 521.2 L420.5 524.8 L421.0 528.5 L421.5 532.4 L422.0 536.3 L422.5 540.3 L423.0 544.2 L423.5 548.2 L424.0 552.0 L424.5 555.7 L425.0 559.3 L425.5 562.7 L426.0 565.8 L426.5 568.8 L427.0 571.4 L427.5 573.8 L428.0 575.8 L428.5 577.5 L429.0 578.9 L429.5 579.9 L430.0 580.5 L430.5 580.7 L431.0 580.5 L431.5 580.0 L432.0 579.1 L432.5 577.8 L433.0 576.2 L433.5 574.2 L434.0 571.9 L434.5 569.3 L435.0 566.4 L435.5 563.3 L436.0 560.0 L436.5 556.4 L437.0 552.7 L437.5 548.9 L438.0 545.0 L438.5 541.1 L439.0 537.1 L439.5 533.2 L440.0 529.3 L440.5 525.5 L441.0 521.9 L441.5 518.4 L442.0 515.1 L442.5 512.1 L443.0 509.3 L443.5 506.8 L444.0 504.6 L444.5 502.7 L445.0 501.2 L445.5 500.0 L446.0 499.2 L446.5 498.8 L447.0 498.7 L447.5 499.1 L448.0 499.8 L448.5 500.9 L449.0 502.4 L449.5 504.2 L450.0 506.3 L450.5 508.7 L451.0 511.5 L451.5 514.5 L452.0 517.7 L452.5 521.2 L453.0 524.8 L453.5 528.5 L454.0 532.4 L454.5 536.3 L455.0 540.3 L455.5 544.2 L456.0 548.2 L456.5 552.0 L457.0 555.7 L457.5 559.3 L458.0 562.7 L458.5 565.8 L459.0 568.8 L459.5 571.4 L460.0 573.8 L460.5 575.8 L461.0 577.5 L461.5 578.9 L462.0 579.9 L462.5 580.5 L463.0 580.7 L463.5 580.5 L464.0 580.0 L464.5 579.1 L465.0 577.8 L465.5 576.2 L466.0 574.2 L466.5 571.9 L467.0 569.3 L467.5 566.4 L468.0 563.3 L468.5 560.0 L469.0 556.4 L469.5 552.7 L470.0 548.9 L470.5 545.0 L471.0 541.1 L471.5 537.1 L472.0 533.2 L472.5 529.3 L473.0 525.5 L473.5 521.9 L474.0 518.4 L474.5 515.1 L475.0 512.1 L475.5 509.3 L476.0 506.8 L476.5 504.6 L477.0 502.7 L477.5 501.2 L478.0 500.0 L478.5 499.2 L479.0 498.8 L479.5 498.7 L480.0 499.1 L480.5 499.8 L481.0 500.9 L481.5 502.4 L482.0 504.2 L482.5 506.3 L483.0 508.7 L483.5 511.5 L484.0 514.5 L484.5 517.7 L485.0 521.2 L485.5 524.8 L486.0 528.5 L486.5 532.4 L487.0 536.3 L487.5 540.3 L488.0 544.2 L488.5 548.2 L489.0 552.0 L489.5 555.7 L490.0 559.3 L490.5 562.7 L491.0 565.8 L491.5 568.8 L492.0 571.4 L492.5 573.8 L493.0 575.8 L493.5 577.5 L494.0 578.9 L494.5 579.9 L495.0 580.5 L495.5 580.7 L496.0 580.5 L496.5 580.0 L497.0 579.1 L497.5 577.8 L498.0 576.2 L498.5 574.2 L499.0 571.9 L499.5 569.3 L500.0 566.4 L500.5 563.3 L501.0 560.0 L501.5 556.4 L502.0 552.7 L502.5 548.9 L503.0 545.0 L503.5 541.1 L504.0 537.1 L504.5 533.2 L505.0 529.3 L505.5 525.5 L506.0 521.9 L506.5 518.4 L507.0 515.1 L507.5 512.1 L508.0 509.3 L508.5 506.8 L509.0 504.6 L509.5 502.7 L510.0 501.2 L510.5 500.0 L511.0 499.2 L511.5 498.8 L512.0 498.7 L512.5 499.1 L513.0 499.8 L513.5 500.9 L514.0 502.4 L514.5 504.2 L515.0 506.3 L515.5 508.7 L516.0 511.5 L516.5 514.5 L517.0 517.7 L517.5 521.2 L518.0 524.8 L518.5 528.5 L519.0 532.4 L519.5 536.3 L520.0 540.3 L520.5 544.2 L521.0 548.2 L521.5 552.0 L522.0 555.7 L522.5 559.3 L523.0 562.7 L523.5 565.8 L524.0 568.8 L524.5 571.4 L525.0 573.8 L525.5 575.8 L526.0 577.5 L526.5 578.9 L527.0 579.9 L527.5 580.5 L528.0 580.7 L528.5 580.5 L529.0 580.0 L529.5 579.1 L530.0 577.8 L530.5 576.2 L531.0 574.2 L531.5 571.9 L532.0 569.3 L532.5 566.4 L533.0 563.3 L533.5 560.0 L534.0 556.4 L534.5 552.7 L535.0 548.9 L535.5 545.0 L536.0 541.1 L536.5 537.1 L537.0 533.2 L537.5 529.3 L538.0 525.5 L538.5 521.9 L539.0 518.4 L539.5 515.1 L540.0 512.1 L540.5 509.3 L541.0 506.8 L541.5 504.6 L542.0 502.7 L542.5 501.2 L543.0 500.0 L543.5 499.2 L544.0 498.8 L544.5 498.7 L545.0 499.1 L545.5 499.8 L546.0 500.9 L546.5 502.4 L547.0 504.2 L547.5 506.3 L548.0 508.7 L548.5 511.5 L549.0 514.5 L549.5 517.7 L550.0 521.2 L550.5 524.8 L551.0 528.5 L551.5 532.4 L552.0 536.3 L552.5 540.3 L553.0 544.2 L553.5 548.2 L554.0 552.0 L554.5 555.7 L555.0 559.3 L555.5 562.7 L556.0 565.8 L556.5 568.8 L557.0 571.4 L557.5 573.8 L558.0 575.8 L558.5 577.5 L559.0 578.9 L559.5 579.9 L560.0 580.5 L560.5 580.7 L561.0 580.5 L561.5 580.0 L562.0 579.1 L562.5 577.8 L563.0 576.2 L563.5 574.2 L564.0 571.9 L564.5 569.3 L565.0 566.4 L565.5 563.3 L566.0 560.0 L566.5 556.4 L567.0 552.7 L567.5 548.9 L568.0 545.0 L568.5 541.1 L569.0 537.1 L569.5 533.2 L570.0 529.3 L570.5 525.5 L571.0 521.9 L571.5 518.4 L572.0 515.1 L572.5 512.1 L573.0 509.3 L573.5 506.8 L574.0 504.6 L574.5 502.7 L575.0 501.2 L575.5 500.0 L576.0 499.2 L576.5 498.8 L577.0 498.7 L577.5 499.1 L578.0 499.8 L578.5 500.9 L579.0 502.4 L579.5 504.2 L580.0 506.3 L580.5 508.7 L581.0 511.5 L581.5 514.5 L582.0 517.7 L582.5 521.2 L583.0 524.8 L583.5 528.5 L584.0 532.4 L584.5 536.3 L585.0 540.3 L585.5 544.2 L586.0 548.2 L586.5 552.0 L587.0 555.7 L587.5 559.3 L588.0 562.7 L588.5 565.8 L589.0 568.8 L589.5 571.4 L590.0 573.8 L590.5 575.8 L591.0 577.5 L591.5 578.9 L592.0 579.9 L592.5 580.5 L593.0 580.7 L593.5 580.5 L594.0 580.0 L594.5 579.1 L595.0 577.8 L595.5 576.2 L596.0 574.2 L596.5 571.9 L597.0 569.3 L597.5 566.4 L598.0 563.3 L598.5 560.0 L599.0 556.4 L599.5 552.7 L600.0 548.9 L600.5 545.0 L601.0 541.1 L601.5 537.1 L602.0 533.2 L602.5 529.3 L603.0 525.5 L603.5 521.9 L604.0 518.4 L604.5 515.1 L605.0 512.1 L605.5 509.3 L606.0 506.8 L606.5 504.6 L607.0 502.7 L607.5 501.2 L608.0 500.0 L608.5 499.2 L609.0 498.8 L609.5 498.7 L610.0 499.1 L610.5 499.8 L611.0 500.9 L611.5 502.4 L612.0 504.2 L612.5 506.3 L613.0 508.7 L613.5 511.5 L614.0 514.5 L614.5 517.7 L615.0 521.2 L615.5 524.8 L616.0 528.5 L616.5 532.4 L617.0 536.3 L617.5 540.3 L618.0 544.2 L618.5 548.2 L619.0 552.0 L619.5 555.7 L620.0 559.3 L620.5 562.7 L621.0 565.8 L621.5 568.8 L622.0 571.4" fill="none" stroke="#d6d600" stroke-width="1.3" stroke-linejoin="round"/></g>
<text x="332" y="567" font-family="Liberation Sans, sans-serif" font-size="12.5" fill="#00d050" text-anchor="middle">1</text>
<rect x="637.5" y="400.5" width="488" height="318" fill="none" stroke="#f4f4f4" stroke-width="1"/>
</svg>
<div id="bbar" class="abs"></div>
<svg class="abs" style="left:0;top:720px" width="1140" height="80" viewBox="0 720 1140 80" fill="none" stroke="#fff" stroke-width="1.6" stroke-linejoin="round" stroke-linecap="round">
<!-- corner brackets -->
<g stroke="#4f9cec" stroke-width="2" filter="url(#glow)">
<path d="M26 728H14V734"/><path d="M14 787V793H26"/><path d="M1114 728H1126V734"/><path d="M1126 787V793H1114"/>
</g>
<defs><filter id="glow" x="-50%" y="-50%" width="200%" height="200%"><feGaussianBlur stdDeviation="1.6" result="b"/><feMerge><feMergeNode in="b"/><feMergeNode in="SourceGraphic"/></feMerge></filter></defs>
<!-- Freq -->
<path d="M39 740.4V735H64.2V740.4M39 750.6V757H64.2V750.6" stroke-width="2" stroke-linecap="butt" stroke-linejoin="miter"/>
<path d="M38.3 745.8L41.1 745.3L43.2 738.6L46.9 753.8L50.6 738.6L54.3 753.8L58 738.6Q59.6 745 61.5 745.4L64.8 745.6" stroke-width="1.3"/>
<!-- Amplitude -->
<rect x="152" y="734.8" width="25.2" height="22.4" rx="3" stroke-width="2"/>
<path d="M155.8 750.2V753.8M159.6 749.6V753.8M163.2 743.8V753.8M166.8 745.4V753.8M170.4 740.6V753.8M174.1 738.4V753.8" stroke-width="2" stroke-linecap="butt"/>
<!-- Average -->
<path d="M266 734.2V756.8H291.6" stroke-width="2" stroke-linecap="butt"/>
<path d="M270.4 756V745.4H273.8V756M277.2 756V741.4H281V756M284.4 756V737.8H288.2V756" stroke-width="1.5" stroke-linecap="butt"/>
<path d="M266 741H292" stroke-width="1.2" stroke-dasharray="3 2.4" stroke-linecap="butt"/>
<!-- Sweep -->
<path d="M386.2 735.7A12.6 11.3 0 1 1 381.9 738.1" stroke-width="1.9"/>
<path d="M391.6 745.9L381.9 738.1A12.6 11.3 0 0 0 384.9 755.5z" fill="url(#swg)" stroke="none"/>
<path d="M391.6 745.9L381.9 738.1" stroke-width="1.5"/>
<circle cx="391.6" cy="745.9" r="1.7" fill="#fff" stroke="none"/>
<defs><linearGradient id="swg" x1="0" y1="0" x2="0.3" y2="1"><stop offset="0" stop-color="#fff" stop-opacity="0.5"/><stop offset="1" stop-color="#fff" stop-opacity="0.12"/></linearGradient></defs>
<!-- Marker -->
<path d="M494.4 734.2V755" stroke-width="1.45"/>
<path d="M494.4 735.9H508.8V747.9H494.4" stroke-width="1.45"/>
<path d="M508.8 739.6H517.2V751.4H505V747.9" stroke-width="1.45"/>
<ellipse cx="494.4" cy="756.2" rx="3.2" ry="1.5" stroke-width="1.3"/>
<!-- Peak -->
<rect x="606" y="734.8" width="25" height="22.4" rx="3" stroke-width="2"/>
<path d="M606.8 755.3C611.6 751.6 610.4 745.4 611.9 742.8C612.8 741.3 614 740.5 615.5 740.2M629.8 755.3C625 751.6 626.2 745.4 624.7 742.8C623.8 741.3 622.6 740.5 621.1 740.2" stroke-width="1.5"/>
<circle cx="618.1" cy="739.5" r="1.7" fill="#fff" stroke="none"/>
<!-- RF -->
<path d="M731.2 735.6H719.9V756.4H743.6V745.6" stroke-width="2.4" stroke-linecap="round"/>
<path d="M736.6 736.3A4.8 4.8 0 0 1 741.5 740.9" stroke-width="2.2"/>
<ellipse cx="731.4" cy="745.9" rx="4.3" ry="4" fill="#fff" stroke="none"/>
<!-- AF -->
<path d="M832 744.4H836V754.2H832zM837.6 747.6H841.6V754.2H837.6zM847.6 742.6H851.2V754.2H847.6zM853.8 737H857.4V754.2H853.8z" stroke-width="1.6" stroke-linejoin="miter"/>
<path d="M844.4 734.2V757.6" stroke-width="1.5"/>
<!-- AW -->
<path d="M945.4 747.7H948.4L949.3 745.6L950.3 752L951.5 743.6L953.2 757.4L954.3 737.2L955.3 751L956.4 734.2L958.2 757.6L960 740.2L961.4 751.4L962.5 743.2L963.5 749L964.4 745.6L965.7 756.6L967.1 747.6H972" stroke-width="1.3"/>
<!-- Measure -->
<path d="M1058.8 749L1075.5 734.8" stroke-width="2"/>
<g transform="translate(1073.5 747.6) rotate(-40.8)">
<rect x="-11" y="-4" width="22" height="8" rx="1.8" stroke-width="1.8"/>
<path d="M-7.2 -3.4V-0.6M-3.6 -3.4V0.4M0 -3.4V-0.6M3.6 -3.4V0.4M7.2 -3.4V-0.6" stroke-width="1.1" stroke-linecap="butt"/>
</g>
</svg>
<div id="labels" style="position:absolute;left:0;top:0;width:1280px;height:800px;will-change:transform">
<span class="t" style="left:48.80px;top:16.81px;font-size:17px;font-weight:700;letter-spacing:-0.380px;">File</span>
<span class="t" style="left:118.69px;top:16.81px;font-size:17px;font-weight:700;letter-spacing:0.110px;">Mode</span>
<span class="t" style="left:202.99px;top:16.81px;font-size:17px;font-weight:700;letter-spacing:-0.338px;">System</span>
<span class="t" style="left:310.49px;top:19.01px;font-size:17px;font-weight:700;letter-spacing:-0.351px;">ScreenShot</span>
<span class="t" style="left:1036.19px;top:6.93px;font-size:14.5px;font-weight:700;letter-spacing:0.649px;">21:35:18</span>
<span class="t" style="left:1027.46px;top:27.03px;font-size:14.5px;font-weight:700;letter-spacing:1.000px;">2023/04/19</span>
<span class="t" style="left:465.16px;top:55.02px;font-size:19px;font-weight:700;color:#ff0000;letter-spacing:0.223px;">Ref Int</span>
<span class="t" style="left:917.36px;top:56.76px;font-size:16px;font-weight:700;">M1</span>
<span class="t" style="left:951.74px;top:56.76px;font-size:16px;font-weight:700;letter-spacing:0.671px;">2.000 ms</span>
<span class="t" style="left:1047.88px;top:56.76px;font-size:16px;font-weight:700;letter-spacing:1.000px;">-28.7 kHz</span>
<span class="t" style="left:1128.40px;top:4.17px;font-size:20px;font-weight:700;letter-spacing:-0.638px;">Audio Waveform</span>
<span class="t" style="left:1148.62px;top:56.79px;font-size:19.5px;font-weight:700;letter-spacing:-0.450px;">Sweep Time</span>
<span class="t" style="left:1160.23px;top:120.92px;font-size:19px;font-weight:700;letter-spacing:0.051px;">Scale/Div</span>
<span class="t" style="left:1163.43px;top:149.02px;font-size:19px;font-weight:700;letter-spacing:0.462px;">20.0 kHz</span>
<span class="t" style="left:26.23px;top:88.26px;font-size:18px;font-weight:700;letter-spacing:0.441px;">Ref Level</span>
<span class="t" style="left:30.78px;top:117.86px;font-size:18px;font-weight:700;letter-spacing:0.797px;">0.0 dBm</span>
<span class="t" style="left:43.32px;top:159.26px;font-size:18px;font-weight:700;letter-spacing:1.000px;">Atten</span>
<span class="t" style="left:41.42px;top:188.86px;font-size:18px;font-weight:700;letter-spacing:0.982px;">10 dB</span>
<span class="t" style="left:25.26px;top:230.26px;font-size:18px;font-weight:700;letter-spacing:0.628px;">Scale/Div</span>
<span class="t" style="left:28.46px;top:259.86px;font-size:18px;font-weight:700;letter-spacing:1.000px;">20.0 kHz</span>
<span class="t" style="left:31.15px;top:301.26px;font-size:18px;font-weight:700;letter-spacing:0.583px;">Average</span>
<span class="t" style="left:53.63px;top:330.86px;font-size:18px;font-weight:700;letter-spacing:1.000px;">Off</span>
<span class="t" style="left:9.79px;top:655.88px;font-size:15.5px;font-weight:700;letter-spacing:0.053px;">Run Local Cont</span>
<span class="t" style="left:53.37px;top:685.02px;font-size:19px;font-weight:700;color:#00e4ec;">DM</span>
<span class="t" style="left:592.88px;top:87.42px;font-size:19px;">RF</span>
<span class="t" style="left:1095.52px;top:87.42px;font-size:19px;">AF</span>
<span class="t" style="left:587.38px;top:407.42px;font-size:19px;">AW</span>
<span class="t" style="left:136.10px;top:372.96px;font-size:16px;letter-spacing:0.048px;">Center Freq</span>
<span class="t" style="left:224.10px;top:372.96px;font-size:16px;letter-spacing:0.026px;">1.000000000 GHz</span>
<span class="t" style="left:428.98px;top:372.96px;font-size:16px;">Span</span>
<span class="t" style="left:536.20px;top:372.96px;font-size:16px;letter-spacing:-0.014px;">100.000 kHz</span>
<span class="t" style="left:636.58px;top:372.96px;font-size:16px;letter-spacing:0.160px;">Start Freq</span>
<span class="t" style="left:717.96px;top:372.96px;font-size:16px;letter-spacing:0.120px;">0 Hz</span>
<span class="t" style="left:889.38px;top:372.96px;font-size:16px;letter-spacing:0.215px;">Stop Freq</span>
<span class="t" style="left:1041.80px;top:372.96px;font-size:16px;letter-spacing:0.038px;">10.000 kHz</span>
<span class="t" style="left:135.58px;top:692.96px;font-size:16px;letter-spacing:0.485px;">Start</span>
<span class="t" style="left:217.36px;top:692.96px;font-size:16px;letter-spacing:-0.080px;">0 ns</span>
<span class="t" style="left:425.48px;top:692.96px;font-size:16px;letter-spacing:0.493px;">Stop</span>
<span class="t" style="left:557.06px;top:692.96px;font-size:16px;letter-spacing:-0.134px;">5.000 ms</span>
<span class="t" style="left:697.80px;top:409.01px;font-size:18px;letter-spacing:0.567px;">Carrier Power</span>
<span class="t" style="left:942.11px;top:409.01px;font-size:18px;letter-spacing:1.000px;">-10.279 dBm</span>
<span class="t" style="left:697.26px;top:438.01px;font-size:18px;letter-spacing:0.864px;">Demod Rate</span>
<span class="t" style="left:942.18px;top:438.01px;font-size:18px;letter-spacing:0.591px;">3.000 kHz</span>
<span class="t" style="left:697.26px;top:467.01px;font-size:18px;letter-spacing:0.769px;">Freq Offset</span>
<span class="t" style="left:942.09px;top:467.01px;font-size:18px;letter-spacing:0.690px;">941 Hz</span>
<span class="t" style="left:697.26px;top:496.01px;font-size:18px;letter-spacing:0.242px;">Peak+</span>
<span class="t" style="left:942.00px;top:496.01px;font-size:18px;letter-spacing:0.613px;">29.157 kHz</span>
<span class="t" style="left:697.26px;top:525.01px;font-size:18px;letter-spacing:0.945px;">Peak-</span>
<span class="t" style="left:942.09px;top:525.01px;font-size:18px;letter-spacing:0.849px;">-29.248 kHz</span>
<span class="t" style="left:697.62px;top:554.01px;font-size:18px;letter-spacing:1.000px;">(Pk-Pk)/2</span>
<span class="t" style="left:942.00px;top:554.01px;font-size:18px;letter-spacing:0.680px;">29.202 kHz</span>
<span class="t" style="left:697.26px;top:583.01px;font-size:18px;letter-spacing:0.395px;">RMS</span>
<span class="t" style="left:942.00px;top:583.01px;font-size:18px;letter-spacing:0.680px;">20.649 kHz</span>
<span class="t" style="left:697.89px;top:612.01px;font-size:18px;letter-spacing:0.308px;">SINAD</span>
<span class="t" style="left:942.18px;top:612.01px;font-size:18px;letter-spacing:0.730px;">51.745 dB</span>
<span class="t" style="left:698.61px;top:641.01px;font-size:18px;letter-spacing:0.770px;">Vrms</span>
<span class="t" style="left:942.18px;top:641.01px;font-size:18px;letter-spacing:0.585px;">0.003</span>
<span class="t" style="left:698.34px;top:670.01px;font-size:18px;letter-spacing:0.590px;">THD</span>
<span class="t" style="left:942.18px;top:670.01px;font-size:18px;letter-spacing:0.533px;">0.029</span>
<span class="t" style="left:697.89px;top:699.01px;font-size:18px;letter-spacing:0.640px;">OBW</span>
<span class="t" style="left:944.97px;top:699.01px;font-size:18px;">--</span>
<span class="t" style="left:31.73px;top:765.66px;font-size:18px;font-weight:700;letter-spacing:0.557px;">Freq</span>
<span class="t" style="left:118.55px;top:765.66px;font-size:18px;font-weight:700;letter-spacing:0.795px;">Amplitude</span>
<span class="t" style="left:241.55px;top:765.66px;font-size:18px;font-weight:700;letter-spacing:0.500px;">Average</span>
<span class="t" style="left:361.66px;top:765.66px;font-size:18px;font-weight:700;letter-spacing:0.598px;">Sweep</span>
<span class="t" style="left:472.83px;top:765.66px;font-size:18px;font-weight:700;letter-spacing:0.980px;">Marker</span>
<span class="t" style="left:596.53px;top:765.66px;font-size:18px;font-weight:700;letter-spacing:0.413px;">Peak</span>
<span class="t" style="left:719.66px;top:765.66px;font-size:18px;font-weight:700;">RF</span>
<span class="t" style="left:833.12px;top:765.66px;font-size:18px;font-weight:700;">AF</span>
<span class="t" style="left:943.28px;top:765.66px;font-size:18px;font-weight:700;">AW</span>
<span class="t" style="left:1033.53px;top:765.66px;font-size:18px;font-weight:700;letter-spacing:0.652px;">Measure</span>
</div>
</body></html>
